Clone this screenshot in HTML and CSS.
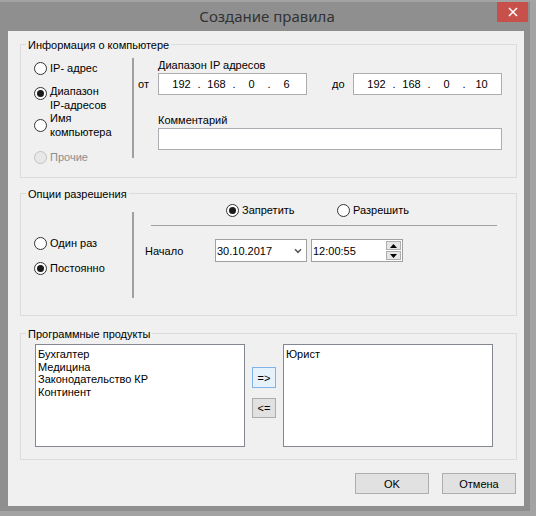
FILE: index.html
```
<!DOCTYPE html>
<html lang="ru">
<head>
<meta charset="utf-8">
<title>Создание правила</title>
<link rel="stylesheet" href="styles.css">
</head>
<body>
<div class="window">
  <div class="titlebar">
    <div class="title">Создание правила</div>
    <div class="close"><svg width="10" height="10" viewBox="0 0 10 10"><path d="M1 1L9 9M9 1L1 9" stroke="#fff" stroke-width="1.5" fill="none"/></svg></div>
  </div>
  <div class="content">
    <div class="group g1">
      <div class="group-title">Информация о компьютере</div>
      <div class="group-body">
        <div class="radio-col rc1">
          <div class="radio"><span class="dot"></span><span class="lbl">IP- адрес</span></div>
          <div class="radio r-range checked"><span class="dot"></span><span class="lbl">Диапазон<br>IP-адресов</span></div>
          <div class="radio r-name"><span class="dot"></span><span class="lbl">Имя<br>компьютера</span></div>
          <div class="radio r-other disabled"><span class="dot"></span><span class="lbl">Прочие</span></div>
        </div>
        <div class="vsep vs1"></div>
        <div class="right r1">
          <div class="field-label">Диапазон IP адресов</div>
          <div class="ip-row">
            <span class="pre">от</span>
            <div class="ipbox"><span>192</span><span>.</span><span>168</span><span>.</span><span>0</span><span>.</span><span>6</span></div>
            <span class="pre2">до</span>
            <div class="ipbox"><span>192</span><span>.</span><span>168</span><span>.</span><span>0</span><span>.</span><span>10</span></div>
          </div>
          <div class="field-label lbl2">Комментарий</div>
          <div class="textbox"></div>
        </div>
      </div>
    </div>

    <div class="group g2">
      <div class="group-title">Опции разрешения</div>
      <div class="group-body">
        <div class="radio-col rc2">
          <div class="radio"><span class="dot"></span><span class="lbl">Один раз</span></div>
          <div class="radio checked"><span class="dot"></span><span class="lbl">Постоянно</span></div>
        </div>
        <div class="vsep vs2"></div>
        <div class="right r2">
          <div class="choice-row">
            <div class="radio checked"><span class="dot"></span><span class="lbl">Запретить</span></div>
            <div class="radio"><span class="dot"></span><span class="lbl">Разрешить</span></div>
          </div>
          <div class="hline"></div>
          <div class="start-row">
            <span class="start-label">Начало</span>
            <div class="combo">
              <span>30.10.2017</span>
              <svg class="chev" width="8" height="6" viewBox="0 0 8 6"><path d="M1 1.2L4 4.4L7 1.2" stroke="#5a5a5a" stroke-width="1.6" fill="none"/></svg>
            </div>
            <div class="timebox">
              <span>12:00:55</span>
              <div class="spin">
                <div class="spin-btn"><svg width="7" height="4" viewBox="0 0 7 4"><path d="M0 4L3.5 0L7 4Z" fill="#000"/></svg></div>
                <div class="spin-btn"><svg width="7" height="4" viewBox="0 0 7 4"><path d="M0 0L3.5 4L7 0Z" fill="#000"/></svg></div>
              </div>
            </div>
          </div>
        </div>
      </div>
    </div>

    <div class="group g3">
      <div class="group-title">Программные продукты</div>
      <div class="group-body">
        <div class="listbox">
          <div>Бухгалтер</div>
          <div>Медицина</div>
          <div>Законодательство КР</div>
          <div>Континент</div>
        </div>
        <div class="arrows">
          <div class="arrow-btn active">=&gt;</div>
          <div class="arrow-btn">&lt;=</div>
        </div>
        <div class="listbox">
          <div>Юрист</div>
        </div>
      </div>
    </div>

    <div class="buttons">
      <div class="btn">OK</div>
      <div class="btn">Отмена</div>
    </div>
  </div>
</div>
</body>
</html>
```
FILE: styles.css
```
* { box-sizing: border-box; }
html, body { margin: 0; padding: 0; }
body {
  width: 536px;
  height: 516px;
  overflow: hidden;
  background: #a3a3a3;
  font-family: "Liberation Sans", Arial, sans-serif;
  font-size: 11px;
  color: #000;
}
.window {
  margin-top: 2px;
  width: 530px;
  height: 509px;
  background: #8f8f8f;
  display: flex;
  flex-direction: column;
}
.titlebar {
  height: 29px;
  flex: none;
  display: grid;
  grid-template-columns: 1fr auto 1fr;
}
.title {
  grid-column: 2;
  font-family: "Noto Sans", "Open Sans", sans-serif;
  font-size: 15px;
  line-height: 29px;
  color: #333;
  padding-left: 4px;
}
.close {
  grid-column: 3;
  justify-self: end;
  width: 31px;
  height: 20px;
  margin-right: 2px;
  background: #c7504b;
  display: flex;
  align-items: center;
  justify-content: center;
}
.content {
  flex: 1;
  margin: 0 6px 5px 8px;
  background: #f0f0f0;
  padding: 0 7px 0 12px;
  display: flex;
  flex-direction: column;
}
.group { border: 1px solid #dcdcdc; flex: none; }
.g1 { margin-top: 13px; }
.g2 { margin-top: 15px; }
.g3 { margin-top: 17px; }
.group-title {
  width: fit-content;
  margin: -7px 0 -7px 5px;
  padding: 0 2px;
  height: 14px;
  line-height: 14px;
  background: #f0f0f0;
}
.group-body { display: flex; }
.g1 .group-body { height: 132px; }
.g2 .group-body { height: 121px; }
.g3 .group-body { height: 125px; }

.radio-col {
  width: 111px;
  flex: none;
  padding-left: 13px;
  display: flex;
  flex-direction: column;
}
.rc1 { padding-top: 16px; }
.rc2 { padding-top: 42px; }
.rc2 .radio + .radio { margin-top: 11px; }
.radio { display: flex; align-items: center; line-height: 14px; }
.radio .lbl { margin-left: 3px; }
.dot {
  flex: none;
  width: 13px;
  height: 13px;
  border-radius: 50%;
  border: 1px solid #333;
  background: #fff;
  display: flex;
  align-items: center;
  justify-content: center;
}
.checked .dot::after {
  content: "";
  width: 7px;
  height: 7px;
  border-radius: 50%;
  background: #1a1a1a;
}
.r-range { margin-top: 9px; align-items: flex-start; }
.r-range .dot { margin-top: 3px; }
.r-name { margin-top: -1px; }
.r-other { margin-top: 11px; color: #8d8d8d; }
.disabled .dot { border-color: #c2c2c2; background: #e8e8e8; }

.vsep { width: 2px; flex: none; background: #a0a0a0; }
.vs1 { margin-top: 13px; height: 100px; }
.vs2 { margin-top: 18px; height: 86px; }

.right { flex: 1; display: flex; flex-direction: column; }
.r1 { padding-top: 13px; }
.field-label { margin-left: 24px; line-height: 14px; }
.lbl2 { margin-top: 18px; }
.ip-row { margin-top: 1px; display: flex; align-items: center; height: 22px; }
.pre { width: 24px; padding-left: 4px; }
.pre2 { width: 21px; margin-left: 25px; }
.ipbox {
  width: 149px;
  height: 22px;
  border: 1px solid #abadb3;
  background: #fff;
  display: grid;
  grid-template-columns: 27px 8px 27px 8px 27px 8px 27px;
  padding-left: 9px;
  align-items: center;
  text-align: center;
}
.textbox {
  margin: 1px 0 0 24px;
  width: 344px;
  height: 22px;
  border: 1px solid #abadb3;
  background: #fff;
}

.r2 { padding-top: 9px; }
.choice-row { display: flex; margin-left: 92px; }
.choice-row .radio:first-child { width: 111px; }
.hline { margin: 8px 0 0 17px; width: 346px; height: 1px; background: #a0a0a0; }
.start-row { margin-top: 13px; display: flex; align-items: center; height: 23px; }
.start-label { width: 81px; padding-left: 11px; }
.combo, .timebox {
  width: 92px;
  height: 23px;
  border: 1px solid #a0a0a0;
  background: #fff;
  display: flex;
  align-items: center;
  padding-left: 1px;
}
.timebox { margin-left: 4px; padding-left: 1px; }
.chev { margin-left: auto; margin-right: 4px; }
.spin {
  margin-left: auto;
  margin-right: 1px;
  width: 15px;
  height: 19px;
  display: flex;
  flex-direction: column;
  gap: 1px;
}
.spin-btn {
  flex: 1;
  border: 1px solid #adadad;
  background: #e6e6e6;
  display: flex;
  align-items: center;
  justify-content: center;
}

.g3 .group-body { padding: 10px 0 0 14px; gap: 7px; align-items: flex-start; }
.listbox {
  flex: none;
  width: 210px;
  height: 103px;
  border: 1px solid #828790;
  background: #fff;
  padding: 3px 0 0 2px;
  line-height: 12.7px;
}
.arrows { width: 24px; flex: none; display: flex; flex-direction: column; }
.arrow-btn {
  height: 21px;
  margin-top: 23px;
  border: 1px solid #adadad;
  background: #e1e1e1;
  display: flex;
  align-items: center;
  justify-content: center;
}
.arrow-btn.active { background: #e5f1fb; border-color: #7eb4ea; }
.arrow-btn + .arrow-btn { margin-top: 10px; height: 20px; }

.buttons {
  display: flex;
  justify-content: flex-end;
  gap: 13px;
  margin-top: 13px;
  padding-right: 1px;
}
.btn {
  width: 74px;
  height: 21px;
  border: 1px solid #adadad;
  background: #e1e1e1;
  display: flex;
  align-items: center;
  justify-content: center;
}
```
